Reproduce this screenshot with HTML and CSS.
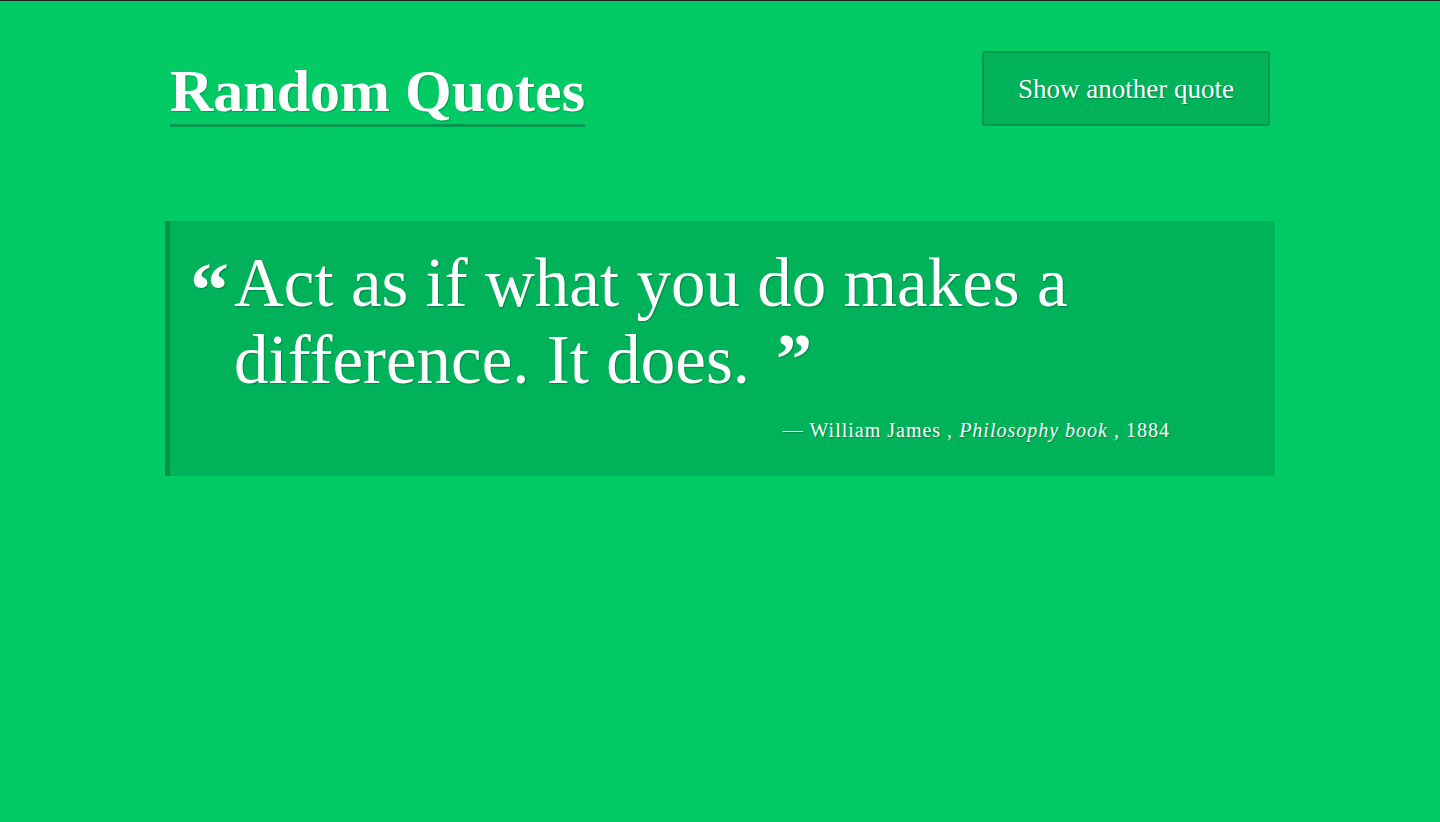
FILE: index.html
```html
<!DOCTYPE html>
<html lang="en">
<head>
<meta charset="utf-8">
<title>Random Quotes</title>
<link rel="stylesheet" href="styles.css">
</head>
<body>
<div class="container">
  <header class="header">
    <h1 class="title">Random Quotes</h1>
    <button class="btn" type="button">Show another quote</button>
  </header>
  <blockquote class="quote">
    <div class="quote-body">
      <span class="mark open">&ldquo;</span>
      <p class="quote-text">Act as if what you do makes a difference. It does.<span class="mark close">&rdquo;</span></p>
    </div>
    <footer class="cite">&mdash; William James , <em>Philosophy book</em> , 1884</footer>
  </blockquote>
</div>
</body>
</html>
```

FILE: styles.css
```css
html, body {
  margin: 0;
  padding: 0;
}
body {
  background: #02cb66;
  border-top: 1px solid #222;
  min-height: 821px;
  font-family: "Liberation Serif", "DejaVu Serif", serif;
  color: #fff;
}
.container {
  width: 1110px;
  margin: 0 auto;
  padding: 0 15px;
}
.header {
  display: flex;
  justify-content: space-between;
  align-items: flex-start;
  padding-top: 50px;
}
.title {
  margin: 0 0 0 5px;
  font-size: 60px;
  font-weight: bold;
  line-height: 66px;
  padding-top: 7px;
  border-bottom: 3px solid #00994d;
  text-shadow: 1px 1px 1px rgba(0,0,0,0.25);
}
.btn {
  margin-right: 5px;
  width: 288px;
  height: 75px;
  background: #00b35a;
  border: 2px solid #00994d;
  border-radius: 3px;
  color: #fff;
  font-family: inherit;
  font-size: 27px;
  padding-top: 3px;
  text-shadow: 1px 1px 1px rgba(0,0,0,0.25);
  cursor: pointer;
}
.quote {
  margin: 94px 0 0;
  background: #00b35a;
  border-left: 5px solid #009347;
  border-radius: 0 3px 3px 0;
  padding: 24px 105px 34px 20px;
}
.quote-body {
  display: flex;
  align-items: flex-start;
}
.mark {
  font-weight: bold;
  text-shadow: 1px 1px 1px rgba(0,0,0,0.25);
}
.open {
  flex: none;
  width: 44px;
  font-size: 78px;
  line-height: 80px;
  margin-top: 5px;
}
.close {
  font-size: 72px;
  line-height: 0;
  margin-left: 26px;
}
.quote-text {
  margin: 0;
  font-size: 69px;
  line-height: 77px;
  text-shadow: 1px 1px 1px rgba(0,0,0,0.25);
}
.cite {
  text-align: right;
  font-size: 20px;
  letter-spacing: 1px;
  margin-top: 20px;
  text-shadow: 1px 1px 1px rgba(0,0,0,0.25);
}
```
